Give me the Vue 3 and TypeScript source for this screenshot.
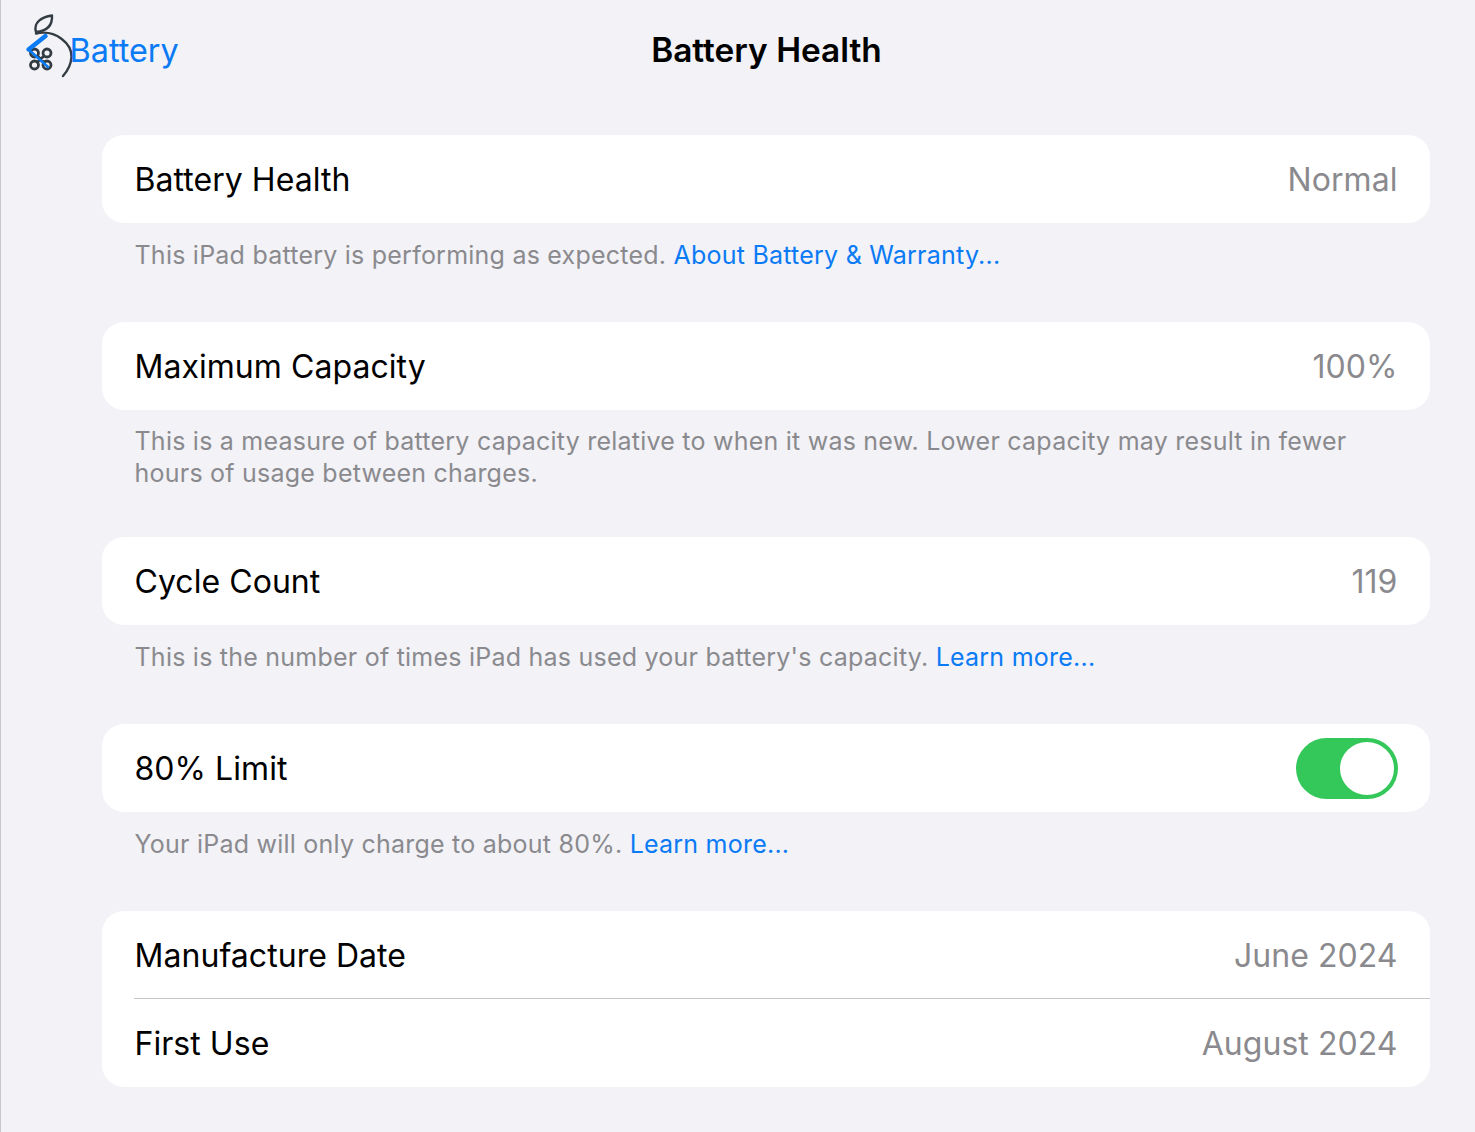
<script setup lang="ts">
interface Row { label: string; value?: string; toggle?: boolean }
interface Section { rows: Row[]; text?: string; link?: string; two?: boolean }

const sections: Section[] = [
  { rows: [{ label: 'Battery Health', value: 'Normal' }], text: 'This iPad battery is performing as expected. ', link: 'About Battery & Warranty...' },
  { rows: [{ label: 'Maximum Capacity', value: '100%' }], text: 'This is a measure of battery capacity relative to when it was new. Lower capacity may result in fewer hours of usage between charges.', two: true },
  { rows: [{ label: 'Cycle Count', value: '119' }], text: "This is the number of times iPad has used your battery's capacity. ", link: 'Learn more...' },
  { rows: [{ label: '80% Limit', toggle: true }], text: 'Your iPad will only charge to about 80%. ', link: 'Learn more...' },
  { rows: [{ label: 'Manufacture Date', value: 'June 2024' }, { label: 'First Use', value: 'August 2024' }] },
]
</script>

<template>
  <div class="page">
    <header class="nav">
      <svg class="logo" width="80" height="80" viewBox="0 0 80 80" fill="none" stroke-linecap="round" stroke-linejoin="round">
        <path d="M36 32C33 22 42 17 52 15.500C52.500 25 47 31 36 32Z" stroke="#333c42" stroke-width="2.400" />
        <path d="M36 33.500C56 29 72 44 71.500 57C71 65 67.500 71 63 76" stroke="#333c42" stroke-width="2.400" />
        <g stroke="#333c42" stroke-width="2.800">
          <circle cx="34.500" cy="53" r="4" />
          <circle cx="47" cy="53" r="4" />
          <circle cx="34.500" cy="65" r="4" />
          <circle cx="47" cy="65" r="4" />
          <path d="M37.500 56L44 62M44 56L37.500 62" />
        </g>
        <path d="M45.500 36L28.500 49.500" stroke="#0a7af5" stroke-width="4.400" />
        <path d="M28.500 49.500L48 67" stroke="#0a7af5" stroke-width="2.600" />
      </svg>
      <span class="back">Battery</span>
      <h1 class="title">Battery Health</h1>
    </header>

    <main class="content">
      <section v-for="(s, i) in sections" :key="i" class="section">
        <div class="card">
          <div v-for="r in s.rows" :key="r.label" class="row">
            <span class="label">{{ r.label }}</span>
            <span v-if="r.value" class="value">{{ r.value }}</span>
            <span v-if="r.toggle" class="switch"><span class="knob"></span></span>
          </div>
        </div>
        <p v-if="s.text" class="foot" :class="{ two: s.two }">{{ s.text }}<span v-if="s.link" class="link">{{ s.link }}</span></p>
      </section>
    </main>
  </div>
</template>

<style scoped>
.page {
  width: 1475px;
  height: 1132px;
  box-sizing: border-box;
  background: #f2f2f7;
  border-left: 1.500px solid #c6c6cc;
  font-family: Inter, "Liberation Sans", sans-serif;
  overflow: hidden;
  color: #000;
}
.nav {
  position: relative;
  height: 135px;
}
.logo {
  position: absolute;
  left: -1.500px;
  top: 0;
}
.back {
  position: absolute;
  left: 68.500px;
  top: 31px;
  font-size: 32.400px;
  line-height: 40px;
  color: #0a7af5;
}
.title {
  margin: 0;
  position: absolute;
  left: 57px;
  right: 0;
  top: 30px;
  text-align: center;
  font-size: 33.400px;
  line-height: 40px;
  font-weight: 600;
}
.content {
  margin-left: 100.500px;
  width: 1328px;
}
.card {
  background: #fff;
  border-radius: 22px;
  overflow: hidden;
}
.row {
  height: 88px;
  display: flex;
  align-items: center;
  justify-content: space-between;
  padding: 0 32px 0 33px;
  position: relative;
}
.row + .row::before {
  content: "";
  position: absolute;
  left: 32px;
  right: 0;
  top: -1px;
  height: 1px;
  background: #c6c6c8;
}
.label,
.value {
  font-size: 32px;
  letter-spacing: 0.05px;
}
.value {
  color: #8a8a8e;
}
.switch {
  width: 102px;
  height: 61px;
  box-sizing: border-box;
  padding: 4px;
  border-radius: 31px;
  background: #34c759;
  display: flex;
  justify-content: flex-end;
}
.knob {
  width: 54px;
  height: 53px;
  border-radius: 50%;
  background: #fff;
}
.foot {
  margin: 0;
  box-sizing: border-box;
  padding: 16px 60px 51px 33px;
  font-size: 25px;
  letter-spacing: 0.23px;
  line-height: 32px;
  color: #8a8a8e;
}
.foot.two {
  padding-top: 15px;
  padding-bottom: 48px;
}
.link {
  color: #0a7af5;
}
</style>

<style>
body { margin: 0; }
</style>
